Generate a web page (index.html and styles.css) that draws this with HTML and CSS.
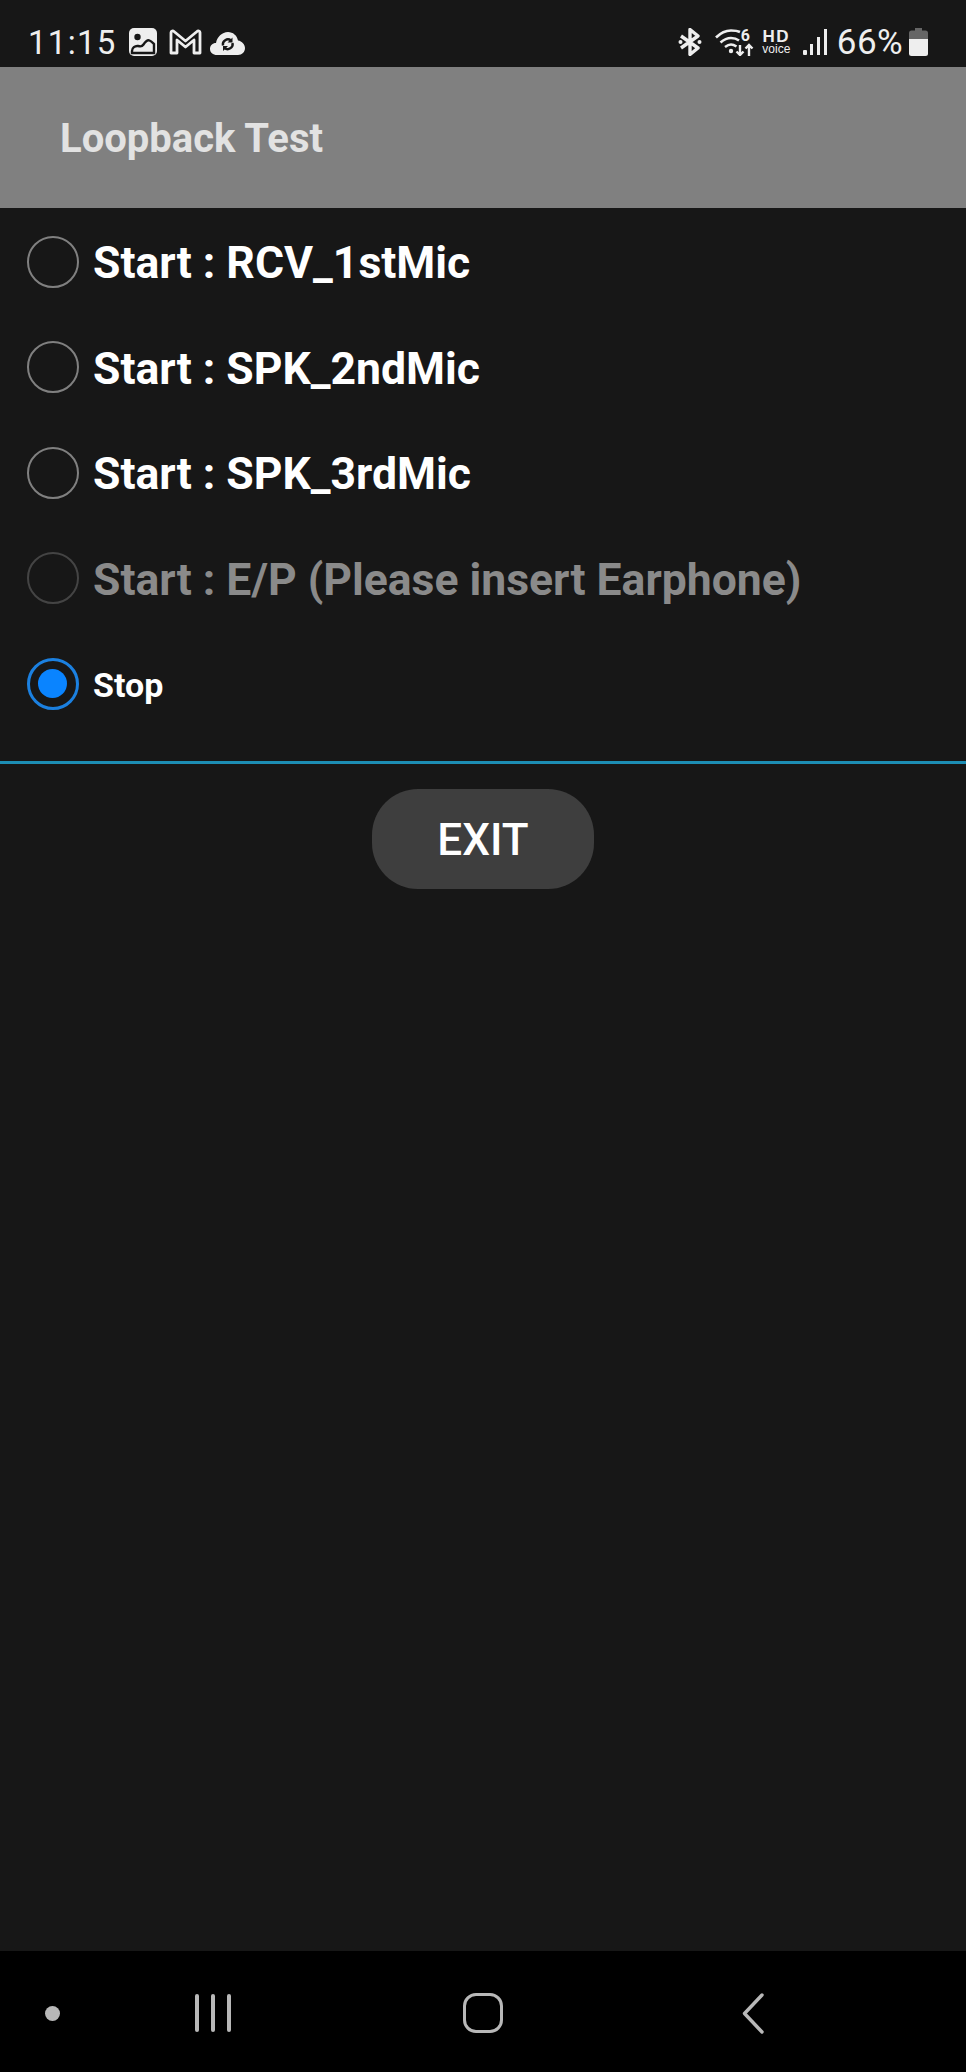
FILE: index.html
```html
<!DOCTYPE html>
<html lang="en">
<head>
  <meta charset="UTF-8">
  <title>Loopback Test</title>
  <link rel="stylesheet" href="styles.css">
</head>
<body>
  <div class="status-bar">
    <span class="clock">11:15</span>
    <svg class="ic-gallery" width="28" height="28" viewBox="0 0 28 28">
      <rect width="28" height="28" rx="5" fill="#eee"/>
      <circle cx="8.5" cy="9" r="3.2" fill="#171717"/>
      <path d="M3 25v-2c0-3 3-5.500 6-5 2.500.4 3.500 1.500 5.500-1.500s3.500-5 6-4c2 .8 3.500 2.500 4.500 3.500v9z" fill="none" stroke="#171717" stroke-width="2.400"/>
    </svg>
    <svg class="ic-gmail" width="33" height="26" viewBox="0 0 33 26">
      <path d="M2 24V3.500C2 2 4 1.500 5 2.500L16.500 12 28 2.500c1-1 3-.5 3 1V24h-6V11l-8.500 7L8 11v13z" fill="none" stroke="#eee" stroke-width="2.800" stroke-linejoin="round"/>
    </svg>
    <svg class="ic-cloud" width="35" height="23" viewBox="0 0 35 23">
      <path d="M7 23C3 23 0 20.500 0 17c0-3.500 2.500-6 6-6C7 5 12 0 18 0c5 0 9 3.500 10 8.500 4 .5 7 4 7 7.500 0 4-3 7-7 7z" fill="#eee"/>
      <path d="M13 13.500a5 5 0 0 1 8-5M22.500 11a5 5 0 0 1-8 5" fill="none" stroke="#171717" stroke-width="2.400"/>
      <path d="M22.500 5.500v5h-5zM13 19v-5h5z" fill="#171717"/>
    </svg>
    <div class="status-right">
      <svg class="ic-bt" width="24" height="28" viewBox="0 0 24 28">
        <path d="M3 8l17 12-8 6.500V1.500L20 8 3 20" fill="none" stroke="#eee" stroke-width="3.400" stroke-linejoin="round"/>
        <circle cx="2.500" cy="14" r="2" fill="#eee"/>
        <circle cx="21.500" cy="14" r="2" fill="#eee"/>
      </svg>
      <div class="wifi">
        <svg width="39" height="28" viewBox="0 0 39 28">
          <path d="M1 9.500C6 4.500 11 2.500 16 2.500s7 .5 9 1.500M5.500 14.500c3.500-3 7-4.500 10.500-4.500s6 1 8 2.500M10 19c2-1.500 4-2.500 6-2.500s4 1 5.500 2" fill="none" stroke="#eee" stroke-width="2.600"/>
          <circle cx="16" cy="23" r="2.200" fill="#eee"/>
          <path d="M25 17v10M21.500 23.500l3.500 3.500 3.500-3.500M34 28V17M30.500 20.500l3.500-3.500 3.500 3.500" fill="none" stroke="#eee" stroke-width="2.400"/>
        </svg>
        <span class="wifi-six">6</span>
      </div>
      <div class="hd"><b>HD</b><span>voice</span></div>
      <svg class="ic-signal" width="24" height="26" viewBox="0 0 24 26">
        <rect x="0" y="21" width="4" height="5" rx="1" fill="#eee"/>
        <rect x="7" y="15" width="3" height="11" fill="#eee"/>
        <rect x="14" y="8" width="3" height="18" fill="#eee"/>
        <rect x="21" y="0" width="3" height="26" fill="#eee"/>
      </svg>
      <span class="battery-text">66%</span>
      <svg class="ic-batt" width="19" height="28" viewBox="0 0 19 28">
        <path d="M6 0h7v2.500h3.500a2.500 2.500 0 0 1 2.500 2.500v6H0V5a2.500 2.500 0 0 1 2.500-2.500H6z" fill="#666"/>
        <path d="M0 11h19v14.500a2.500 2.500 0 0 1-2.500 2.500h-14A2.500 2.500 0 0 1 0 25.500z" fill="#eee"/>
      </svg>
    </div>
  </div>

  <div class="title-bar">Loopback Test</div>

  <div class="main">
    <div class="radio-list">
      <div class="radio-row"><span class="radio"></span><span class="label">Start : RCV_1stMic</span></div>
      <div class="radio-row"><span class="radio"></span><span class="label">Start : SPK_2ndMic</span></div>
      <div class="radio-row"><span class="radio"></span><span class="label">Start : SPK_3rdMic</span></div>
      <div class="radio-row disabled"><span class="radio"></span><span class="label">Start : E/P (Please insert Earphone)</span></div>
      <div class="radio-row checked"><span class="radio"></span><span class="label">Stop</span></div>
    </div>
    <div class="divider"></div>
    <div class="btn-wrap"><div class="exit-btn">EXIT</div></div>
  </div>

  <div class="nav-bar">
    <span class="nav-dot"></span>
    <div class="nav-recents"><i></i><i></i><i></i></div>
    <span class="nav-home"></span>
    <svg class="nav-back" width="22" height="41" viewBox="0 0 22 41">
      <path d="M20 2L2.500 20.500 20 39" fill="none" stroke="#b8b8b8" stroke-width="3.400" stroke-linecap="round" stroke-linejoin="round"/>
    </svg>
  </div>
</body>
</html>
```

FILE: styles.css
```css
html, body {
  margin: 0;
  padding: 0;
}

body {
  width: 966px;
  height: 2072px;
  display: flex;
  flex-direction: column;
  overflow: hidden;
  background-color: #171717;
  font-family: Roboto, "Liberation Sans", sans-serif;
  color: #fff;
}

/* status bar */
.status-bar {
  height: 67px;
  flex: none;
  display: flex;
  align-items: center;
  padding: 17px 38px 0 28px;
  box-sizing: border-box;
  color: #eee;
}

.clock {
  font-size: 33px;
  letter-spacing: 1.3px;
  width: 101px;
}

.ic-gmail {
  margin-left: 12px;
}

.ic-cloud {
  margin-left: 8px;
  margin-top: 2px;
}

.status-right {
  margin-left: auto;
  display: flex;
  align-items: center;
}

.wifi {
  position: relative;
  margin-left: 13px;
  height: 28px;
}

.wifi svg {
  display: block;
}

.wifi-six {
  position: absolute;
  right: 4px;
  top: -2px;
  font-size: 16px;
  font-weight: 700;
}

.hd {
  margin-left: 8px;
  width: 29px;
  display: flex;
  flex-direction: column;
  align-items: center;
  line-height: 1;
}

.hd b {
  font-size: 17px;
  letter-spacing: 1.500px;
  font-family: "Liberation Sans", sans-serif;
  line-height: 15px;
}

.hd span {
  font-size: 12px;
  line-height: 11px;
  font-family: "Liberation Sans", sans-serif;
}

.ic-signal {
  margin-left: 12px;
}

.battery-text {
  margin-left: 10px;
  font-size: 35px;
  letter-spacing: 0.4px;
}

.ic-batt {
  margin-left: 6px;
}

/* title */
.title-bar {
  height: 141px;
  flex: none;
  display: flex;
  align-items: center;
  padding: 2px 0 0 60px;
  box-sizing: border-box;
  background-color: #808080;
  color: #e2e2e2;
  font-size: 40px;
  font-weight: 700;
}

/* radios */
.main {
  flex: 1;
}

.radio-list {
  padding-top: 1px;
}

.radio-row {
  height: 105.500px;
  display: flex;
  align-items: center;
  padding-left: 27px;
}

.radio {
  width: 52px;
  height: 52px;
  box-sizing: border-box;
  border: 2.500px solid #808080;
  border-radius: 50%;
  flex: none;
  position: relative;
}

.label {
  margin: 3px 0 0 14px;
  font-size: 44.500px;
  font-weight: 700;
}

.radio-row.disabled .radio {
  border-color: #444;
}

.radio-row.disabled .label {
  color: #8a8a8a;
}

.radio-row.checked .radio {
  border: 3px solid #1b80e0;
}

.radio-row.checked .radio::after {
  content: "";
  position: absolute;
  left: 8px;
  top: 8px;
  width: 29px;
  height: 29px;
  border-radius: 50%;
  background-color: #0a84ff;
}

.radio-row.checked .label {
  font-size: 34px;
}

.divider {
  height: 3px;
  margin-top: 24px;
  background-color: #1d8eb4;
}

.btn-wrap {
  display: flex;
  justify-content: center;
  margin-top: 25px;
}

.exit-btn {
  width: 222px;
  height: 100px;
  border-radius: 46px;
  background-color: #3e3e3e;
  display: flex;
  align-items: center;
  justify-content: center;
  padding-top: 2px;
  box-sizing: border-box;
  font-size: 44px;
  font-weight: 500;
}

/* navigation */
.nav-bar {
  height: 121px;
  flex: none;
  display: flex;
  align-items: center;
  padding-top: 3px;
  box-sizing: border-box;
  background-color: #000;
}

.nav-dot {
  width: 15px;
  height: 15px;
  margin-left: 45px;
  border-radius: 50%;
  background-color: #b8b8b8;
}

.nav-recents {
  margin-left: 135px;
  width: 36px;
  height: 38px;
  display: flex;
  justify-content: space-between;
}

.nav-recents i {
  width: 4px;
  background-color: #b8b8b8;
  border-radius: 2px;
}

.nav-home {
  margin-left: 232px;
  width: 40px;
  height: 40px;
  box-sizing: border-box;
  border: 3.500px solid #b8b8b8;
  border-radius: 13px;
}

.nav-back {
  margin-left: 239px;
}
```
